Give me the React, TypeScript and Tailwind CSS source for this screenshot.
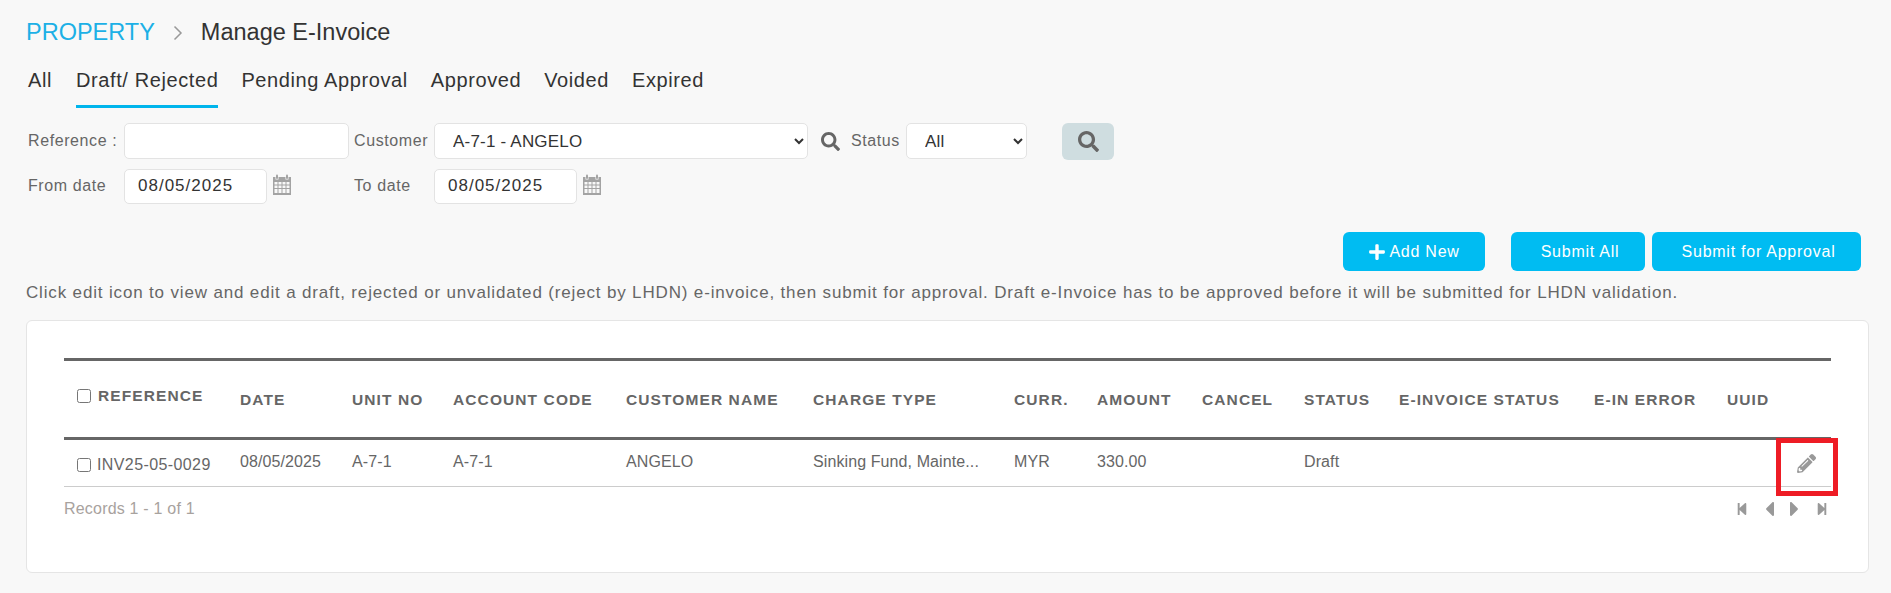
import { FaCaretLeft, FaCaretRight, FaPencilAlt, FaPlus, FaSearch, FaStepBackward, FaStepForward } from 'react-icons/fa';

const CalendarIcon = () => (
  <svg width="20" height="21" viewBox="0 0 20 21" className="shrink-0">
    <path fillRule="evenodd" fill="#a3a3a3" d="M1 3h2.5v2.5h3V3h7v2.5h3V3H19v18H1zM2.5 8v2.5h3V8zm4 0v2.5h3V8zm4 0v2.5h3V8zm4 0v2.5h3V8zm-12 3.5V14h3v-2.500zm4 0V14h3v-2.500zm4 0V14h3v-2.500zm4 0V14h3v-2.500zm-12 3.500v4h3v-4zm4 0v4h3v-4zm4 0v4h3v-4zm4 0v4h3v-4z" />
    <rect x="4" y="0.500" width="2" height="4.500" rx="1" fill="#a3a3a3" />
    <rect x="14" y="0.500" width="2" height="4.500" rx="1" fill="#a3a3a3" />
  </svg>
);

const tabs = ['All', 'Draft/ Rejected', 'Pending Approval', 'Approved', 'Voided', 'Expired'];

const columns = [
  { label: 'DATE', value: '08/05/2025', width: 'w-[112px]' },
  { label: 'UNIT NO', value: 'A-7-1', width: 'w-[101px]' },
  { label: 'ACCOUNT CODE', value: 'A-7-1', width: 'w-[173px]' },
  { label: 'CUSTOMER NAME', value: 'ANGELO', width: 'w-[187px]' },
  { label: 'CHARGE TYPE', value: 'Sinking Fund, Mainte...', width: 'w-[201px]' },
  { label: 'CURR.', value: 'MYR', width: 'w-[83px]' },
  { label: 'AMOUNT', value: '330.00', width: 'w-[105px]' },
  { label: 'CANCEL', value: '', width: 'w-[102px]' },
  { label: 'STATUS', value: 'Draft', width: 'w-[95px]' },
  { label: 'E-INVOICE STATUS', value: '', width: 'w-[195px]' },
  { label: 'E-IN ERROR', value: '', width: 'w-[133px]' },
  { label: 'UUID', value: '', width: 'w-[67px]' },
];

const boxClass = 'rounded-[5px] border border-[#e3e3e3] bg-white text-[#333]';

export default function App() {
  return (
    <div className="min-h-[593px] bg-[#f8f8f8] px-[26px] font-['Liberation_Sans',Arial,sans-serif] text-[#666]">
      {/* breadcrumb */}
      <div className="flex h-[64px] items-center pt-[1px]">
        <span className="text-[23.5px] text-[#1cb0e6]">PROPERTY</span>
        <svg width="10" height="16" viewBox="0 0 10 16" className="ml-[18px] mr-[18px]">
          <path d="M1.500 1.500 8 8l-6.500 6.500" fill="none" stroke="#999" strokeWidth="1.500" />
        </svg>
        <span className="text-[23.5px] text-[#333]">Manage E-Invoice</span>
      </div>

      {/* tabs */}
      <div className="ml-[2px] flex h-[44px] gap-[23px]">
        {tabs.map((t) => (
          <div
            key={t}
            className={`h-[44px] pt-[2px] text-[20px] leading-[28px] tracking-[0.6px] text-[#333] first:pr-[1px] ${t === 'Draft/ Rejected' ? 'border-b-[3px] border-[#00b5ec]' : ''}`}
          >
            {t}
          </div>
        ))}
      </div>

      {/* filters */}
      <div className="mt-[15px] flex h-[36px] items-center text-[16px] tracking-[0.6px]">
        <label className="ml-[2px] w-[96px]">Reference :</label>
        <input className={`${boxClass} h-[36px] w-[225px]`} />
        <label className="ml-[5px] w-[80px]">Customer</label>
        <select defaultValue="A-7-1" className={`${boxClass} h-[36px] w-[374px] pl-[14px] text-[17px] tracking-[0.2px]`}>
          <option value="A-7-1">A-7-1 - ANGELO</option>
        </select>
        <FaSearch className="ml-[13px] text-[19px] text-[#666]" />
        <label className="ml-[11px] w-[55px]">Status</label>
        <select defaultValue="All" className={`${boxClass} h-[36px] w-[121px] pl-[14px] text-[17px] tracking-[0.2px]`}>
          <option>All</option>
        </select>
        <button className="ml-[35px] flex h-[37px] w-[52px] items-center justify-center rounded-[6px] bg-[#cfdde0]">
          <FaSearch className="text-[21px] text-[#666]" />
        </button>
      </div>
      <div className="mt-[9px] flex h-[36px] items-center text-[16px] tracking-[0.6px]">
        <label className="ml-[2px] w-[96px] pb-[1px]">From date</label>
        <input defaultValue="08/05/2025" className={`${boxClass} h-[35px] w-[143px] pl-[13px] text-[17px] tracking-[1px]`} />
        <span className="mb-[3px] ml-[5px]"><CalendarIcon /></span>
        <label className="ml-[62px] w-[80px] pb-[1px]">To date</label>
        <input defaultValue="08/05/2025" className={`${boxClass} h-[35px] w-[143px] pl-[13px] text-[17px] tracking-[1px]`} />
        <span className="mb-[3px] ml-[5px]"><CalendarIcon /></span>
      </div>

      {/* actions */}
      <div className="mr-[4px] mt-[28px] flex h-[39px] justify-end text-[16px] tracking-[0.75px] text-white">
        <button className="flex w-[142px] items-center justify-center gap-[3px] rounded-[6px] bg-[#00bcf2]">
          <FaPlus className="text-[18px]" />
          Add New
        </button>
        <button className="ml-[26px] w-[134px] rounded-[6px] bg-[#00bcf2] pl-[4px]">Submit All</button>
        <button className="ml-[7px] w-[209px] rounded-[6px] bg-[#00bcf2] pl-[4px]">Submit for Approval</button>
      </div>
      <p className="mt-[12px] h-[20px] whitespace-nowrap text-[17px] leading-[20px] tracking-[0.84px]">
        Click edit icon to view and edit a draft, rejected or unvalidated (reject by LHDN) e-invoice, then submit for approval. Draft e-Invoice has to be approved before it will be submitted for LHDN validation.
      </p>

      {/* table card */}
      <div className="relative mt-[17px] h-[253px] w-[1843px] rounded-[6px] border border-[#e5e5e5] bg-white px-[37px] pt-[37px]">
        <table className="w-[1767px] table-fixed border-collapse border-t-[3px] border-[#666]">
          <thead>
            <tr className="h-[79px] border-b-[3px] border-[#666]">
              <th className="w-[163px] pb-[6px] pl-[13px] text-left text-[15.5px] font-bold tracking-[1.1px]">
                <span className="flex items-center gap-[7px]">
                  <input type="checkbox" className="h-[14px] w-[14px]" />
                  REFERENCE
                </span>
              </th>
              {columns.map((c) => (
                <th key={c.label} className={`${c.width} whitespace-nowrap pl-[13px] pt-[2px] text-left text-[15.5px] font-bold tracking-[1.1px]`}>
                  {c.label}
                </th>
              ))}
              <th className="w-[50px]" />
            </tr>
          </thead>
          <tbody>
            <tr className="h-[48px] border-b border-[#ccc] text-[16px] tracking-[0.1px]">
              <td className="pl-[13px]">
                <span className="flex items-center gap-[6px] pt-[3px] tracking-[0.4px]">
                  <input type="checkbox" className="h-[14px] w-[14px]" />
                  INV25-05-0029
                </span>
              </td>
              {columns.map((c) => (
                <td key={c.label} className="whitespace-nowrap pb-[2px] pl-[13px]">{c.value}</td>
              ))}
              <td className="text-center">
                <FaPencilAlt className="mx-auto text-[19px] text-[#999]" />
              </td>
            </tr>
          </tbody>
        </table>

        <div className="mt-[10px] flex w-[1767px] items-center justify-between">
          <span className="text-[16px] tracking-[0.2px] text-[#a8a29e]">Records 1 - 1 of 1</span>
          <div className="mr-[3px] flex items-center gap-[16px] text-[#999]">
            <FaStepBackward className="h-[14px] w-[12px]" />
            <FaCaretLeft className="ml-[1px] h-[24px] w-[9px]" />
            <FaCaretRight className="h-[24px] w-[9px]" />
            <FaStepForward className="ml-[1px] h-[14px] w-[12px]" />
          </div>
        </div>

        {/* red highlight drawn over the edit icon */}
        <div className="absolute left-[1749px] top-[117px] h-[58px] w-[62px] border-[5px] border-[#ee1c25]" />
      </div>
    </div>
  );
}
